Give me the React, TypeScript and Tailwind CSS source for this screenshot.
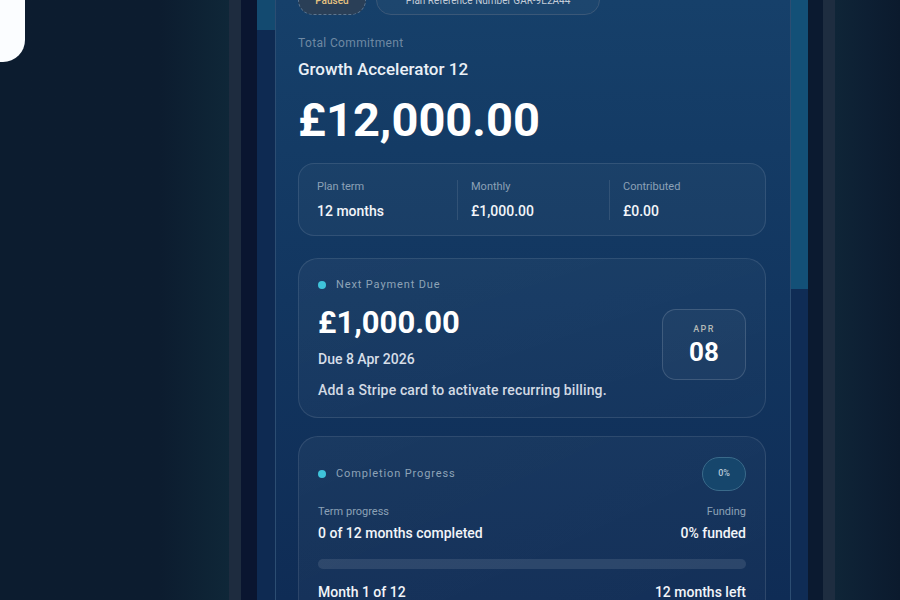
const stats = [
  { label: 'Plan term', value: '12 months', w: 'w-[140px]' },
  { label: 'Monthly', value: '£1,000.00', w: 'w-[152px] border-l border-white/10 pl-[13px]' },
  { label: 'Contributed', value: '£0.00', w: 'flex-1 border-l border-white/10 pl-[13px]' },
];

const Dot = () => <span className="w-[8px] h-[8px] rounded-full bg-[#3fc3da] shrink-0" />;

export default function App() {
  return (
    <div className="h-screen w-full overflow-hidden flex bg-[#0c1c2f] font-['Roboto',sans-serif]">
      {/* left backdrop */}
      <div className="w-[229px] shrink-0 bg-gradient-to-r from-[#0c1c2f] from-[70%] to-[#0f2738]">
        <div className="w-[25px] h-[62px] bg-[#fbfdff] rounded-br-[22px]" />
      </div>
      <div className="w-[12px] shrink-0 bg-[#1e2c3f]" />
      <div className="w-[16px] shrink-0 bg-[#0a1530]" />
      <div className="w-[18px] shrink-0 flex flex-col">
        <div className="h-[30px] bg-[#134a70]" />
        <div className="flex-1 bg-[#0e2a52]" />
      </div>
      <div className="w-[1px] shrink-0 bg-[#2c4d72]" />

      {/* main panel */}
      <div className="w-[514px] shrink-0 bg-gradient-to-b from-[#16406a] via-[#123660] to-[#0f2c55] pl-[22px] pr-[24px]">
        <div className="-mt-[15px] flex flex-col">
          {/* pills */}
          <div className="flex gap-[10px] h-[30px]">
            <div className="w-[68px] rounded-full border border-dashed border-[#5d7690] bg-[#2a3f57] flex items-center justify-center text-[10px] font-medium text-[#e6c27f]">
              Paused
            </div>
            <div className="w-[224px] rounded-full border border-[#3b5878] bg-white/[0.03] flex items-center justify-center text-[10px] text-[#c3ccd8]">
              Plan Reference Number GAR-9E2A44
            </div>
          </div>

          <div className="mt-5 text-[12px] leading-[16px] tracking-[0.03em] text-[#6f89a3]">Total Commitment</div>
          <div className="mt-[6px] text-[17px] leading-[24px] font-medium text-[#eaf0f6]">Growth Accelerator 12</div>
          <div className="mt-[13px] text-[47px] leading-[52px] font-bold text-white">£12,000.00</div>

          {/* stats */}
          <div className="mt-[17px] h-[73px] rounded-[16px] border border-white/10 bg-white/[0.03] flex items-center px-[18px]">
            {stats.map((s) => (
              <div key={s.label} className={`${s.w} h-[40px] flex flex-col justify-center gap-[8px]`}>
                <div className="text-[11px] leading-[14px] text-[#8ca1b6]">{s.label}</div>
                <div className="text-[14px] leading-[18px] font-medium text-[#f2f5f9]">{s.value}</div>
              </div>
            ))}
          </div>

          {/* next payment */}
          <div className="mt-[22px] h-[160px] rounded-[20px] border border-white/10 bg-gradient-to-br from-white/[0.04] to-white/[0.02] px-[19px] pt-[18px] flex items-start justify-between">
            <div className="flex flex-col">
              <div className="flex items-center gap-[10px] h-[16px]">
                <Dot />
                <span className="text-[11px] tracking-[0.08em] text-[#8ea3b7]">Next Payment Due</span>
              </div>
              <div className="mt-[12px] text-[31px] leading-[36px] font-bold text-white">£1,000.00</div>
              <div className="mt-[9px] text-[14px] leading-[18px] font-medium text-[#d6dee8]">Due 8 Apr 2026</div>
              <div className="mt-[13px] text-[14px] leading-[18px] font-medium tracking-[0.01em] text-[#d2dae4]">
                Add a Stripe card to activate recurring billing.
              </div>
            </div>
            <div className="mt-[32px] w-[84px] h-[71px] rounded-[14px] border border-white/15 bg-white/[0.03] flex flex-col items-center justify-center gap-[3px]">
              <span className="text-[9px] leading-[12px] tracking-[0.15em] font-medium text-[#b4b9b5]">APR</span>
              <span className="text-[26px] leading-[28px] font-bold text-white">08</span>
            </div>
          </div>

          {/* completion progress */}
          <div className="mt-[18px] h-[220px] rounded-[20px] border border-white/10 bg-gradient-to-br from-white/[0.04] to-white/[0.02] px-[19px] pt-[20px]">
            <div className="flex items-center justify-between">
              <div className="flex items-center gap-[10px]">
                <Dot />
                <span className="text-[11px] tracking-[0.08em] text-[#8ea3b7]">Completion Progress</span>
              </div>
              <div className="w-[44px] h-[34px] rounded-full border border-[#3a6a8a] bg-[#16466c] flex items-center justify-center text-[9px] font-medium text-[#b8c8d6]">
                0%
              </div>
            </div>
            <div className="mt-[13px] flex justify-between">
              <div className="flex flex-col gap-[4px]">
                <span className="text-[11px] leading-[16px] text-[#8ca1b6]">Term progress</span>
                <span className="text-[14px] leading-[18px] font-medium text-[#f2f5f9]">0 of 12 months completed</span>
              </div>
              <div className="flex flex-col gap-[4px] items-end">
                <span className="text-[11px] leading-[16px] text-[#8ca1b6]">Funding</span>
                <span className="text-[14px] leading-[18px] font-medium text-[#f2f5f9]">0% funded</span>
              </div>
            </div>
            <div className="mt-[17px] h-[10px] rounded-full bg-white/10" />
            <div className="mt-[14px] flex justify-between text-[14px] leading-[18px] font-medium text-[#f2f5f9]">
              <span>Month 1 of 12</span>
              <span>12 months left</span>
            </div>
          </div>
        </div>
      </div>

      <div className="w-[1px] shrink-0 bg-[#2c4d72]" />
      <div className="w-[17px] shrink-0 flex flex-col">
        <div className="h-[289px] bg-[#135077]" />
        <div className="flex-1 bg-[#0f2c55]" />
      </div>
      <div className="w-[15px] shrink-0 bg-[#0b1a30]" />
      <div className="w-[12px] shrink-0 bg-[#1e2d40]" />
      <div className="flex-1 bg-gradient-to-r from-[#0f2537] via-[#0d1f33] to-[#0b1a2d]" />
    </div>
  );
}
